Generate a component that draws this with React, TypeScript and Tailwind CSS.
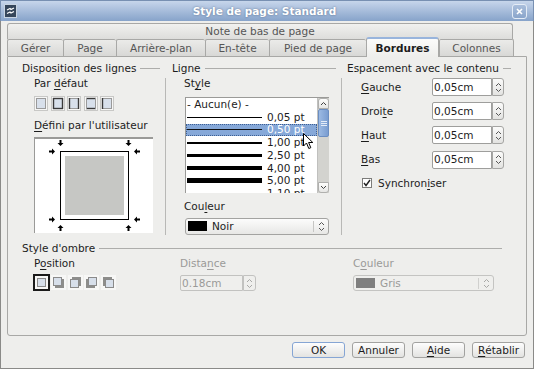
import React from "react";

function U({ children }: { children: React.ReactNode }) {
  return <span className="underline underline-offset-[2px]">{children}</span>;
}

function GroupHeader({ children, className = "" }: { children: React.ReactNode; className?: string }) {
  return (
    <div className={`flex items-center h-[13px] ${className}`}>
      <span className="whitespace-nowrap">{children}</span>
      <div className="ml-[4px] flex-1 h-px bg-[#adadab]" />
    </div>
  );
}

function UpDown({ color = "#555" }: { color?: string }) {
  return (
    <svg width="7" height="11" viewBox="0 0 7 11">
      <path d="M1 4 L3.5 1.5 L6 4" fill="none" stroke={color} strokeWidth="1" />
      <path d="M1 7 L3.5 9.5 L6 7" fill="none" stroke={color} strokeWidth="1" />
    </svg>
  );
}

function Spin({ disabled = false, w = "w-[12px]" }: { disabled?: boolean; w?: string }) {
  return (
    <div
      className={`${w} h-full flex items-center justify-center border rounded-r-[3px] ${
        disabled ? "border-[#c2c2c0] bg-[#efefed]" : "border-[#a5a5a3] bg-gradient-to-b from-[#fbfbfa] to-[#e3e3e1]"
      }`}
    >
      <UpDown color={disabled ? "#a8a8a6" : "#555"} />
    </div>
  );
}

function SpinField({ value }: { value: string }) {
  return (
    <div className="flex h-[18px]">
      <div className="w-[60px] h-full bg-white border border-[#9e9e9c] rounded-l-[2px] flex items-center pl-[1px]">
        {value}
      </div>
      <Spin />
    </div>
  );
}

function DefaultIcon({ kind }: { kind: number }) {
  const dark = "#3a3a3a";
  const light = "#9a9a9a";
  const L = kind === 2 || kind === 3 || kind === 5;
  const R = kind === 2 || kind === 3;
  const T = kind === 2 || kind === 4;
  const B = kind === 2 || kind === 4;
  return (
    <svg width="14" height="15" viewBox="0 0 14 15">
      <rect x="0.5" y="0.5" width="13" height="14" fill="#f6f6f5" stroke="#c8c8c6" />
      <rect x="2" y="2" width="10" height="11" fill="#d8e0eb" />
      <line x1="2" y1="2.5" x2="12" y2="2.5" stroke={T ? dark : light} strokeWidth={T ? 1.4 : 1} />
      <line x1="2" y1="12.5" x2="12" y2="12.5" stroke={B ? dark : light} strokeWidth={B ? 1.4 : 1} />
      <line x1="2.5" y1="2" x2="2.5" y2="13" stroke={L ? dark : light} strokeWidth={L ? 1.4 : 1} />
      <line x1="11.5" y1="2" x2="11.5" y2="13" stroke={R ? dark : light} strokeWidth={R ? 1.4 : 1} />
    </svg>
  );
}

function ShadowIcon({ kind }: { kind: number }) {
  const off: Record<number, [number, number]> = { 1: [2, 2], 2: [2, -2], 3: [-2, 2], 4: [-2, -2] };
  const o = off[kind];
  const bx = 3.5 - (o ? o[0] / 2 : 0);
  const by = 3.5 - (o ? o[1] / 2 : 0);
  return (
    <svg width="15" height="15" viewBox="0 0 15 15">
      <rect x="0" y="0" width="15" height="15" fill="#f7f7f6" />
      {o && <rect x={bx + o[0] - 0.5} y={by + o[1] - 0.5} width="9" height="9" fill="#8d8d8b" />}
      <rect x={bx} y={by} width="8" height="8" fill="#d7dfea" stroke="#8a8a8a" />
    </svg>
  );
}

function Arrow({ x, y, rot }: { x: number; y: number; rot: number }) {
  return (
    <polygon
      points={`${x - 1},${y - 6} ${x + 1},${y - 6} ${x + 1},${y - 3} ${x + 3},${y - 3} ${x},${y} ${x - 3},${y - 3} ${x - 1},${y - 3}`}
      fill="#000"
      transform={`rotate(${rot} ${x} ${y})`}
    />
  );
}

function Preview() {
  return (
    <div className="w-[119px] h-[96px] bg-white border-t-2 border-l border-[#9a9a98]">
      <svg width="118" height="94" viewBox="0 0 118 94">
        <rect x="25.5" y="12.5" width="68" height="68" fill="#fff" stroke="#000" />
        <rect x="30" y="17" width="59" height="59" fill="#c6c7c4" />
        <Arrow x={25.5} y={7} rot={0} />
        <Arrow x={93.5} y={7} rot={0} />
        <Arrow x={20} y={12.5} rot={-90} />
        <Arrow x={99} y={12.5} rot={90} />
        <Arrow x={20} y={80.5} rot={-90} />
        <Arrow x={99} y={80.5} rot={90} />
        <Arrow x={25.5} y={86} rot={180} />
        <Arrow x={93.5} y={86} rot={180} />
      </svg>
    </div>
  );
}

const lineRows = [
  { label: "- Aucun(e) -", line: "" },
  { label: "0,05 pt", line: "h-px" },
  { label: "0,50 pt", line: "h-px", sel: true },
  { label: "1,00 pt", line: "h-[2px]" },
  { label: "2,50 pt", line: "h-[3px]" },
  { label: "4,00 pt", line: "h-[4px]" },
  { label: "5,00 pt", line: "h-[5px]" },
  { label: "1,10 pt", line: "h-px" },
];

function LineList() {
  return (
    <div className="relative w-[144px] h-[96px] bg-white border-t border-l border-[#9a9a98] flex overflow-hidden">
      <div className="flex-1 flex flex-col">
        {lineRows.map((r, i) =>
          r.line === "" ? (
            <div key={i} className="h-[12.75px] shrink-0 flex items-center pl-[1px]">
              {r.label}
            </div>
          ) : (
            <div
              key={i}
              className={`h-[12.75px] shrink-0 flex items-center ${
                r.sel ? "bg-[#86a8d8] text-white outline-1 outline-dotted outline-[#3d5f93] -outline-offset-1" : ""
              }`}
            >
              <div className={`w-[75px] ml-[1px] ${r.line} ${r.sel ? "bg-[#111]" : "bg-black"}`} />
              <span className="ml-[5px] whitespace-nowrap">{r.label}</span>
            </div>
          )
        )}
      </div>
      <div className="w-[12px] h-full flex flex-col bg-[#d3d3cf] border-l border-[#c0c0be]">
        <div className="h-[11px] bg-gradient-to-b from-[#fdfdfc] to-[#e6e6e4] border border-[#b0b0ae] rounded-t-[3px] flex items-center justify-center">
          <svg width="7" height="5" viewBox="0 0 7 5">
            <path d="M1 4 L3.5 1.5 L6 4" fill="none" stroke="#444" />
          </svg>
        </div>
        <div className="h-[28px] bg-gradient-to-r from-[#9cbae3] to-[#7a9dd0] border border-[#6b8ec2] rounded-[2px] flex items-center justify-center">
          <svg width="6" height="6" viewBox="0 0 6 6">
            <path d="M0 1.5 H6 M0 3.5 H6 M0 5.5 H6" stroke="#e4ecf7" strokeWidth="1" />
          </svg>
        </div>
        <div className="flex-1" />
        <div className="h-[11px] bg-gradient-to-b from-[#fdfdfc] to-[#e6e6e4] border border-[#b0b0ae] rounded-b-[3px] flex items-center justify-center">
          <svg width="7" height="5" viewBox="0 0 7 5">
            <path d="M1 1 L3.5 3.5 L6 1" fill="none" stroke="#444" />
          </svg>
        </div>
      </div>
      <svg className="absolute left-[117px] top-[35px] z-10" width="11" height="17" viewBox="0 0 11 17">
        <path d="M0.5 0.5 L0.5 13 L3.5 10 L5.8 15.5 L7.8 14.7 L5.6 9.5 L9.8 9.5 Z" fill="#fff" stroke="#000" strokeWidth="1" strokeLinejoin="round" />
      </svg>
    </div>
  );
}

function ColorDrop({
  swatch,
  label,
  disabled = false,
  w,
  h,
}: {
  swatch: string;
  label: string;
  disabled?: boolean;
  w: string;
  h: string;
}) {
  return (
    <div
      className={`${w} ${h} flex items-center rounded-[3px] border ${
        disabled
          ? "border-[#c4c4c2] bg-[#efefed] text-[#9a9a98]"
          : "border-[#a3a3a1] bg-gradient-to-b from-[#fcfcfc] to-[#e7e7e5]"
      }`}
    >
      <div className={`ml-[2px] w-[19px] h-[10px] ${swatch}`} />
      <span className="ml-[5px] flex-1">{label}</span>
      <div className={`h-[11px] w-px ${disabled ? "bg-[#d0d0ce]" : "bg-[#c6c6c4]"}`} />
      <div className="w-[14px] flex justify-center">
        <UpDown color={disabled ? "#a8a8a6" : "#555"} />
      </div>
    </div>
  );
}

const tabs = [
  { label: "Gérer", w: "w-[56px]" },
  { label: "Page", w: "w-[53px]" },
  { label: "Arrière-plan", w: "w-[89px]" },
  { label: "En-tête", w: "w-[64px]" },
  { label: "Pied de page", w: "w-[97px]" },
  { label: "Bordures", w: "w-[73px]", sel: true },
  { label: "Colonnes", w: "w-[75px]", last: true },
];

function Button({ children, focus = false }: { children: React.ReactNode; focus?: boolean }) {
  return (
    <div
      className={`w-[53px] h-[16px] flex items-center justify-center rounded-[3px] border bg-gradient-to-b from-[#fdfdfd] to-[#e3e3e1] ${
        focus ? "border-[#85a5d4]" : "border-[#a2a2a0]"
      }`}
    >
      {children}
    </div>
  );
}

export default function App() {
  return (
    <div className="w-[534px] h-[369px] flex flex-col bg-[#eeeeec] font-['DejaVu_Sans',sans-serif] text-[10.5px] leading-[13px] text-[#1c1c1c] overflow-hidden select-none">
      <div className="h-[21px] shrink-0 flex items-center bg-gradient-to-b from-[#c7d6eb] to-[#87a3ca] border-x border-t border-[#7890b2]">
        <svg className="ml-[3px]" width="13" height="14" viewBox="0 0 13 14">
          <rect x="0.5" y="0.5" width="12" height="13" fill="#35465b" stroke="#c8d4e2" />
          <path d="M3 6 L6 4.5 L7 5.5 L10 4" fill="none" stroke="#fff" strokeWidth="1.2" />
          <path d="M3 9.5 L6 8 L7 9 L10 7.5" fill="none" stroke="#fff" strokeWidth="1.2" />
        </svg>
        <div className="flex-1 text-center font-bold text-white [text-shadow:0_0_2px_rgba(40,60,90,0.6)]">
          Style de page: Standard
        </div>
        <div className="mr-[6px] w-[15px] h-[15px] rounded-[3px] border border-[#e4ecf6] bg-gradient-to-b from-[#a9bedb] to-[#8aa5cb] flex items-center justify-center">
          <svg width="7" height="7" viewBox="0 0 7 7">
            <path d="M1 1 L6 6 M6 1 L1 6" stroke="#fff" strokeWidth="1.6" />
          </svg>
        </div>
      </div>

      <div className="flex-1 flex flex-col border-x border-b border-[#8a8a88] px-[6px]">
        <div className="mt-[2px] w-[506px] h-[16px] flex items-center justify-center rounded-t-[3px] border border-b-0 border-[#a8a8a6] bg-gradient-to-b from-[#f1f1ef] to-[#dddddb] text-[#555]">
          Note de bas de page
        </div>
        <div className="h-[17px] flex items-end">
          {tabs.map((t) =>
            t.sel ? (
              <div
                key={t.label}
                className={`${t.w} h-[20px] -mb-px relative z-10 flex items-center justify-center font-bold rounded-t-[3px] border-x border-t-2 border-x-[#a8a8a6] border-t-[#98b4dc] bg-gradient-to-b from-[#fbfbfa] to-[#eeeeec]`}
              >
                {t.label}
              </div>
            ) : (
              <div
                key={t.label}
                className={`${t.w} h-[17px] flex items-center justify-center text-[#555] rounded-t-[2px] border-t border-l ${
                  t.last ? "border-r" : ""
                } border-[#a8a8a6] bg-gradient-to-b from-[#ebebe9] to-[#d8d8d6]`}
              >
                {t.label}
              </div>
            )
          )}
        </div>

        <div className="w-[520px] h-[280px] border border-[#a8a8a6] rounded-b-[3px] pl-[14px] pt-[5px] flex flex-col">
          <div className="flex h-[174px]">
            <div className="w-[138px] flex flex-col">
              <GroupHeader>Disposition des lignes</GroupHeader>
              <div className="pl-[12px] flex flex-col">
                <div className="mt-[2px] h-[13px]">
                  Par <U>d</U>éfaut
                </div>
                <div className="mt-[6px] h-[15px] flex gap-[2.5px]">
                  <DefaultIcon kind={1} />
                  <DefaultIcon kind={2} />
                  <DefaultIcon kind={3} />
                  <DefaultIcon kind={4} />
                  <DefaultIcon kind={5} />
                </div>
                <div className="mt-[8px] h-[13px] whitespace-nowrap">
                  <U>D</U>éfini par l'utilisateur
                </div>
                <div className="mt-[5px]">
                  <Preview />
                </div>
              </div>
            </div>
            <div className="w-[12px] pl-[5px] pt-[16px]">
              <div className="w-px h-[157px] bg-[#b8b8b6]" />
            </div>
            <div className="w-[164px] flex flex-col">
              <GroupHeader>Ligne</GroupHeader>
              <div className="pl-[12px] mt-[2px] h-[13px]">
                St<U>y</U>le
              </div>
              <div className="ml-[13px] mt-[7px]">
                <LineList />
              </div>
              <div className="pl-[12px] mt-[6.5px] h-[13px]">
                Cou<U>l</U>eur
              </div>
              <div className="ml-[13px] mt-[5px]">
                <ColorDrop swatch="bg-black" label="Noir" w="w-[144px]" h="h-[17px]" />
              </div>
            </div>
            <div className="w-[11px] pl-[5px] pt-[16px]">
              <div className="w-px h-[157px] bg-[#b8b8b6]" />
            </div>
            <div className="w-[164px] flex flex-col">
              <GroupHeader>Espacement avec le contenu</GroupHeader>
              <div className="mt-[3px] pl-[14px] flex flex-col gap-[6.2px]">
                {[
                  [<><U>G</U>auche</>, "g"],
                  [<>Droi<U>t</U>e</>, "d"],
                  [<><U>H</U>aut</>, "h"],
                  [<><U>B</U>as</>, "b"],
                ].map(([lab, k]) => (
                  <div key={k as string} className="h-[18px] flex items-center">
                    <div className="w-[71px]">{lab}</div>
                    <SpinField value="0,05cm" />
                  </div>
                ))}
              </div>
              <div className="mt-[8px] pl-[15px] h-[13px] flex items-center">
                <div className="w-[10px] h-[10px] bg-white border border-[#7c7c7a] flex items-center justify-center">
                  <svg width="8" height="8" viewBox="0 0 8 8">
                    <path d="M1 4 L3 6.5 L7 1" fill="none" stroke="#222" strokeWidth="1.4" />
                  </svg>
                </div>
                <span className="ml-[6px]">
                  Synchron<U>i</U>ser
                </span>
              </div>
            </div>
          </div>

          <GroupHeader className="mt-[6px] w-[480px]">Style d'ombre</GroupHeader>
          <div className="flex mt-[2px]">
            <div className="w-[158px] pl-[12px] flex flex-col">
              <div className="h-[13px]">
                P<U>o</U>sition
              </div>
              <div className="mt-[4px] h-[17px] flex items-center">
                <div className="w-[17px] h-[17px] border-2 border-[#1a1a1a] -ml-[1px] flex items-center justify-center">
                  <svg width="13" height="13" viewBox="0 0 13 13">
                    <rect x="0" y="0" width="13" height="13" fill="#f7f7f6" />
                    <rect x="2.5" y="2.5" width="8" height="8" fill="#d7dfea" stroke="#8a8a8a" />
                  </svg>
                </div>
                <div className="ml-[1px] flex gap-[1.7px]">
                  <ShadowIcon kind={1} />
                  <ShadowIcon kind={2} />
                  <ShadowIcon kind={3} />
                  <ShadowIcon kind={4} />
                </div>
              </div>
            </div>
            <div className="w-[173px] flex flex-col text-[#9a9a98]">
              <div className="h-[13px]">
                Dista<U>n</U>ce
              </div>
              <div className="mt-[5px] h-[16px] flex">
                <div className="w-[63px] h-full bg-[#efefed] border border-[#c2c2c0] rounded-l-[2px] flex items-center pl-[1px]">
                  0.18cm
                </div>
                <Spin disabled w="w-[13px]" />
              </div>
            </div>
            <div className="flex flex-col text-[#9a9a98]">
              <div className="h-[13px]">
                C<U>o</U>uleur
              </div>
              <div className="mt-[5px]">
                <ColorDrop swatch="bg-[#7f7f7f]" label="Gris" disabled w="w-[141px]" h="h-[16px]" />
              </div>
            </div>
          </div>
        </div>

        <div className="mt-[6px] pr-[2px] flex justify-end gap-[7px]">
          <Button focus>OK</Button>
          <Button>Annuler</Button>
          <Button>
            <U>A</U>ide
          </Button>
          <Button>
            <U>R</U>établir
          </Button>
        </div>
      </div>
    </div>
  );
}
